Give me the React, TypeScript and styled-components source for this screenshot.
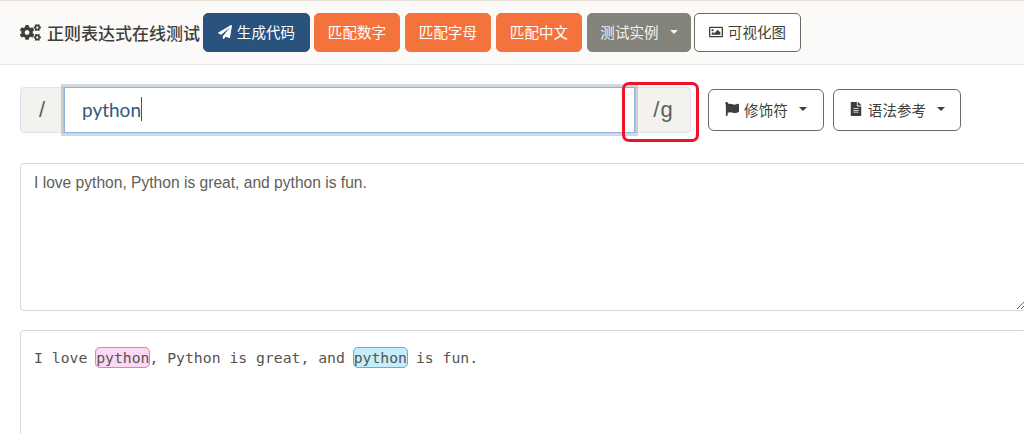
import React from "react";
import styled, { createGlobalStyle } from "styled-components";
import { FaCogs, FaPaperPlane, FaRegImage, FaFlag, FaFileAlt } from "react-icons/fa";

const Global = createGlobalStyle`
  html, body { margin: 0; padding: 0; background: #fff; overflow: hidden; width: 1024px; height: 434px; }
  body { font-family: Lato, "Noto Sans CJK SC", sans-serif; color: #3e3f3a; }
`;

const Page = styled.div`
  width: 1024px;
  height: 434px;
  overflow: hidden;
  border-top: 1px solid #e6dfd6;
  box-sizing: border-box;
`;

const Toolbar = styled.header`
  height: 64px;
  box-sizing: border-box;
  padding: 12px 0 0 20px;
  display: flex;
  align-items: flex-start;
  background: #fbfaf8;
  border-bottom: 1px solid #ece6df;
`;

const Brand = styled.div`
  display: flex;
  align-items: center;
  gap: 6px;
  height: 39px;
  margin-right: 3px;
  font-size: 17px;
  font-weight: 500;
  color: #3e3f3a;
  white-space: nowrap;
`;

const variants = {
  navy: "background:#29527c;border-color:#29527c;color:#fff;",
  orange: "background:#f4733c;border-color:#f4733c;color:#fff;",
  gray: "background:#84837b;border-color:#84837b;color:#f3f2ee;",
  outline: "background:#fff;border-color:#6b6b66;color:#3e3f3a;",
} as const;

const Btn = styled.button<{ $v: keyof typeof variants; $w: number; $h?: number; $ml?: number }>`
  ${(p) => variants[p.$v]}
  width: ${(p) => p.$w}px;
  height: ${(p) => p.$h ?? 39}px;
  margin-left: ${(p) => p.$ml ?? 0}px;
  box-sizing: border-box;
  border-width: 1px;
  border-style: solid;
  border-radius: 5px;
  padding: 0 0 2px;
  display: inline-flex;
  align-items: center;
  justify-content: center;
  gap: 5px;
  font-family: Lato, "Noto Sans CJK SC", sans-serif;
  font-size: 14.5px;
  letter-spacing: 0.1px;
  flex: none;
`;

const Caret = styled.span`
  width: 0;
  height: 0;
  margin-left: 6px;
  border-left: 4px solid transparent;
  border-right: 4px solid transparent;
  border-top: 4px solid currentColor;
`;

const Content = styled.main`
  padding: 22px 0 0 20px;
`;

const QueryRow = styled.div`
  display: flex;
  align-items: center;
  height: 46px;
`;

const InputGroup = styled.div`
  position: relative;
  display: flex;
  width: 671px;
  height: 46px;
  margin-right: 17px;
  flex: none;
`;

const Addon = styled.div<{ $side: "left" | "right"; $w: number }>`
  width: ${(p) => p.$w}px;
  box-sizing: border-box;
  display: flex;
  align-items: center;
  justify-content: center;
  padding-left: 1px;
  background: #f4f2ee;
  border: 1px solid #dfe3e8;
  border-radius: ${(p) => (p.$side === "left" ? "4px 0 0 4px" : "0 4px 4px 0")};
  font-size: 22px;
  letter-spacing: 1px;
  color: #5e5e58;
  flex: none;
  font-family: "Liberation Sans", sans-serif;
`;

const RegexInput = styled.div`
  flex: 1;
  box-sizing: border-box;
  display: flex;
  align-items: center;
  padding-left: 17px;
  padding-bottom: 2px;
  background: #fff;
  border: 1px solid #8fb3d6;
  box-shadow: 0 0 0 3px rgba(41, 82, 124, 0.22);
  font-size: 19px;
  color: #32587f;
  z-index: 1;
`;

const Cursor = styled.span`
  width: 1px;
  height: 24px;
  background: #32587f;
`;

const Highlight = styled.div`
  position: absolute;
  left: 602px;
  top: -5px;
  width: 77px;
  height: 60px;
  box-sizing: border-box;
  border: 3px solid #ee1228;
  border-radius: 7px;
  z-index: 2;
`;

const RowBtn = styled(Btn)`
  border-radius: 6px;
`;

const TextBox = styled.textarea`
  display: block;
  width: 1006px;
  height: 148px;
  margin: 30px 0 0 0;
  box-sizing: border-box;
  padding: 8px 13px;
  border: 1px solid #d3d8df;
  border-radius: 4px;
  background: #fff;
  resize: vertical;
  outline: none;
  font-family: "Liberation Sans", sans-serif;
  font-size: 15.6px;
  line-height: 21px;
  color: #5e5e58;
`;

const Result = styled.div`
  width: 1006px;
  height: 140px;
  margin-top: 19px;
  box-sizing: border-box;
  padding: 16px 13px;
  border: 1px solid #d3d8df;
  border-radius: 4px;
  font-family: "DejaVu Sans Mono", monospace;
  font-size: 14.75px;
  line-height: 22px;
  color: #55554f;
  white-space: pre;
`;

const tones = {
  pink: "background:#fbd9f5;border-color:#e97dbb;",
  blue: "background:#c4eefb;border-color:#4fb3f5;",
} as const;

const Match = styled.mark<{ $t: keyof typeof tones }>`
  ${(p) => tones[p.$t]}
  color: inherit;
  border-width: 1px;
  border-style: solid;
  border-radius: 5px;
  margin: 0 -1px;
  padding: 1px 0;
`;

export default function App() {
  return (
    <Page>
      <Global />
      <Toolbar>
        <Brand>
          <FaCogs size={21} />
          正则表达式在线测试
        </Brand>
        <Btn $v="navy" $w={107}>
          <FaPaperPlane size={14} />
          生成代码
        </Btn>
        <Btn $v="orange" $w={86} $ml={4}>匹配数字</Btn>
        <Btn $v="orange" $w={86} $ml={5}>匹配字母</Btn>
        <Btn $v="orange" $w={86} $ml={5}>匹配中文</Btn>
        <Btn $v="gray" $w={104} $ml={5}>
          测试实例
          <Caret />
        </Btn>
        <Btn $v="outline" $w={107} $ml={3}>
          <FaRegImage size={14} />
          可视化图
        </Btn>
      </Toolbar>
      <Content>
        <QueryRow>
          <InputGroup>
            <Addon $side="left" $w={44}>/</Addon>
            <RegexInput>
              python
              <Cursor />
            </RegexInput>
            <Addon $side="right" $w={56}>/g</Addon>
            <Highlight />
          </InputGroup>
          <RowBtn $v="outline" $w={116} $h={42}>
            <FaFlag size={14} />
            修饰符
            <Caret />
          </RowBtn>
          <RowBtn $v="outline" $w={128} $h={42} $ml={9}>
            <FaFileAlt size={14} />
            语法参考
            <Caret />
          </RowBtn>
        </QueryRow>
        <TextBox readOnly defaultValue="I love python, Python is great, and python is fun." />
        <Result>
          I love <Match $t="pink">python</Match>, Python is great, and <Match $t="blue">python</Match> is fun.
        </Result>
      </Content>
    </Page>
  );
}
